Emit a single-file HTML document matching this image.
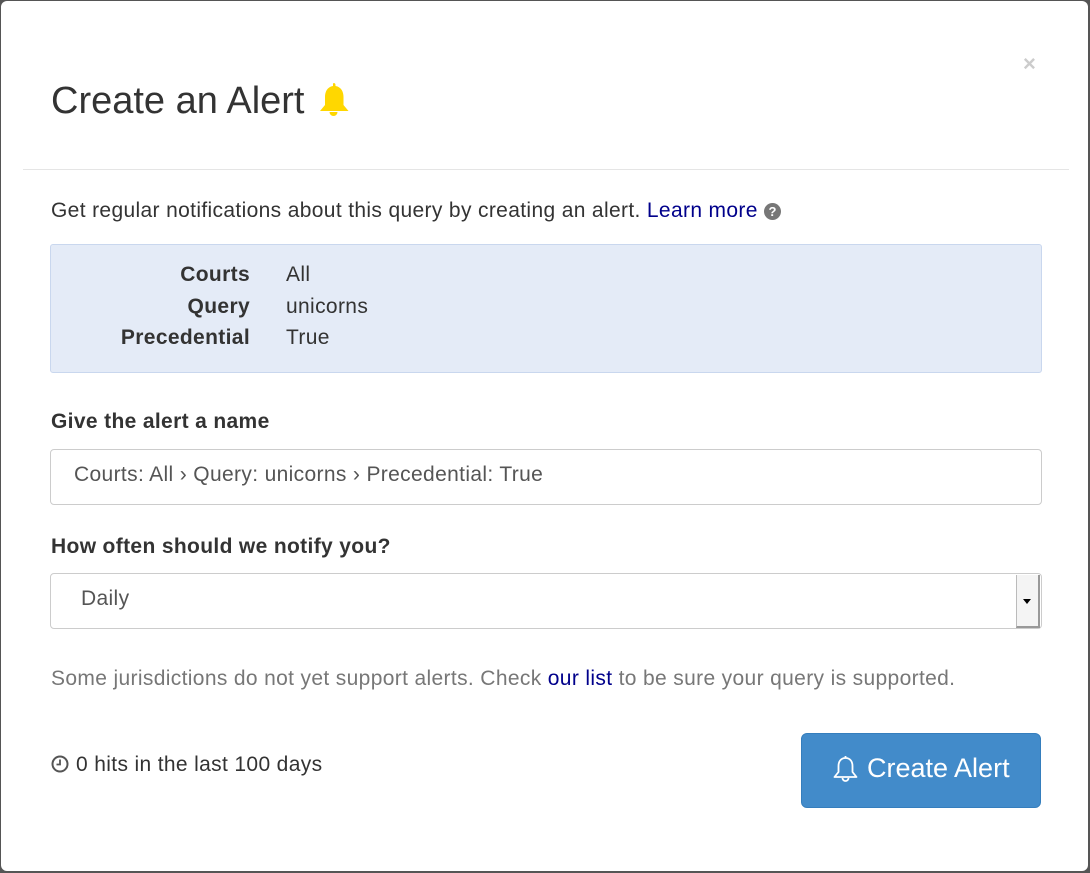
<!DOCTYPE html><html><head><style>
body{margin:0;width:1090px;height:873px;background:#555;font-family:"Liberation Sans",sans-serif;color:#333;overflow:hidden}
.m{position:absolute;left:1px;top:1px;width:1087px;height:870px;background:#fff;border-radius:6px}
.p{position:absolute;white-space:nowrap}
.t{font-size:21px;letter-spacing:0.35px}
a{color:#00008b;text-decoration:none}
</style></head><body><div class="m">
<div class="p" style="left:50px;top:79px;font-size:38px;">Create an Alert</div>
<svg class="p" style="left:314px;top:80px" width="37" height="40" viewBox="0 0 37 40"><path d="M18.5 2a2 2 0 0 1 2 2v1c6 1 8 6 8 11v8l5 6H5l5-6v-8c0-5 2-10 8-11V4a2 2 0 0 1 .5-2z" fill="#ffd700"/><path d="M14.5 31a4 4 0 0 0 8 0z" fill="#ffd700"/></svg>
<div class="p" style="left:1022px;top:50px;font-size:22px;font-weight:bold;color:#ccc">×</div>
<div style="position:absolute;left:22px;top:168px;width:1046px;border-top:1px solid #e5e5e5"></div>
<div class="p t" style="left:50px;top:198px">Get regular notifications about this query by creating an alert. <a>Learn more</a> <span style="display:inline-block;width:17px;height:17px;border-radius:50%;background:#777;color:#fff;font-size:13px;font-weight:bold;text-align:center;line-height:17px;vertical-align:1px;letter-spacing:0">?</span></div>
<div style="position:absolute;left:49px;top:243px;width:990px;height:127px;background:#e4ebf7;border:1px solid #c9d7ee;border-radius:3px"></div>
<div class="p t" style="left:40px;top:258px;width:209px;text-align:right;font-weight:bold;line-height:31.5px">Courts<br>Query<br>Precedential</div>
<div class="p t" style="left:285px;top:258px;line-height:31.5px">All<br>unicorns<br>True</div>
<div class="p t" style="left:50px;top:409px;font-weight:bold">Give the alert a name</div>
<div style="position:absolute;left:49px;top:448px;width:990px;height:54px;border:1px solid #ccc;border-radius:4px"></div>
<div class="p t" style="left:73px;top:462px;color:#555">Courts: All › Query: unicorns › Precedential: True</div>
<div class="p t" style="left:50px;top:534px;font-weight:bold">How often should we notify you?</div>
<div style="position:absolute;left:49px;top:572px;width:990px;height:54px;border:1px solid #ccc;border-radius:4px"></div>
<div style="position:absolute;left:1015px;top:574px;width:21px;height:51px;background:#f4f4f4;border-left:1px solid #bbb;border-right:2px solid #999;border-bottom:2px solid #999"></div>
<div style="position:absolute;left:1022px;top:598px;border:4px solid transparent;border-top:5px solid #000"></div>
<div class="p t" style="left:80px;top:586px;color:#555">Daily</div>
<div class="p t" style="left:50px;top:666px;color:#777">Some jurisdictions do not yet support alerts. Check <a>our list</a> to be sure your query is supported.</div>
<svg class="p" style="left:50px;top:754px" width="18" height="18" viewBox="0 0 18 18"><circle cx="9" cy="9" r="7.5" fill="none" stroke="#555" stroke-width="2"/><path d="M9 4.5V9.5H5.5" fill="none" stroke="#555" stroke-width="1.8"/></svg>
<div class="p t" style="left:75px;top:752px">0 hits in the last 100 days</div>
<div style="position:absolute;left:800px;top:732px;width:238px;height:73px;background:#428bca;border:1px solid #357ebd;border-radius:6px"></div>
<svg class="p" style="left:831px;top:753px" width="27" height="30" viewBox="0 0 27 30"><path d="M13.5 2v2M13.5 4c-5 0-7 4-7 8v6l-4 5h22l-4-5v-6c0-4-2-8-7-8z" fill="none" stroke="#fff" stroke-width="1.8" stroke-linejoin="round"/><path d="M10.5 24a3 3 0 0 0 6 0" fill="none" stroke="#fff" stroke-width="1.8"/></svg>
<div class="p" style="left:866px;top:752px;font-size:27px;color:#fff">Create Alert</div>
</div></body></html>
